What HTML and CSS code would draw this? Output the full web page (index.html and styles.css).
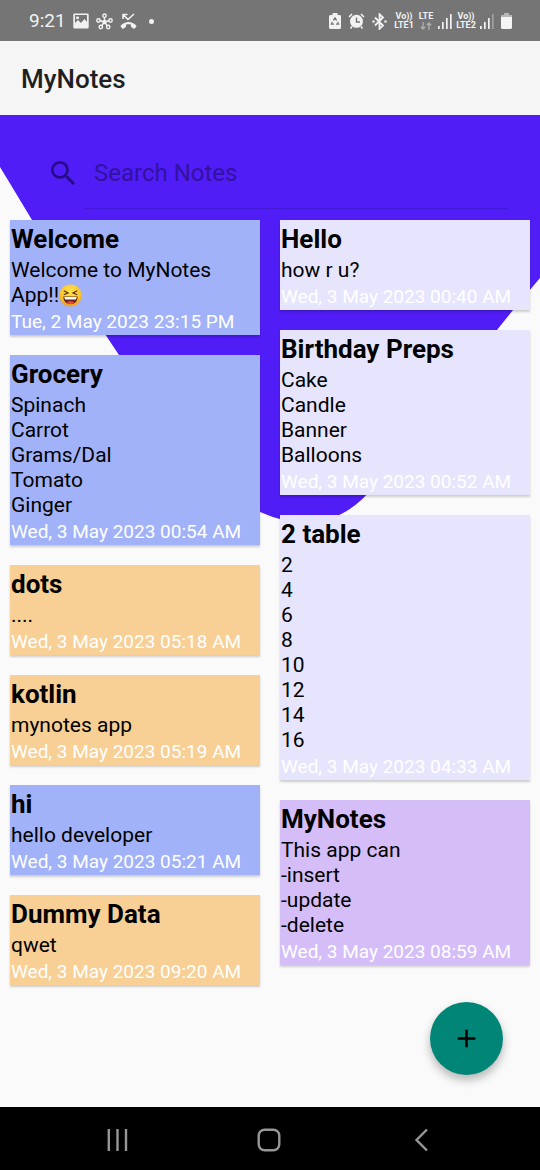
FILE: index.html
```html
<!DOCTYPE html>
<html lang="en">
<head>
<meta charset="utf-8">
<meta name="viewport" content="width=device-width, initial-scale=1">
<title>MyNotes</title>
<link rel="stylesheet" href="styles.css">
</head>
<body>
<div class="status">
  <div class="status-left">
    <span class="clock">9:21</span>
    <svg width="16" height="16" viewBox="0 0 16 16" aria-hidden="true"><path fill="#f2f2f2" fill-rule="evenodd" d="M1.500 0.500h13a1.200 1.200 0 0 1 1.200 1.200v12.600a1.200 1.200 0 0 1-1.200 1.200h-13a1.200 1.200 0 0 1-1.200-1.200V1.700A1.200 1.200 0 0 1 1.500 .5zM2 2v8l3-3 3 3 3.500-4L14 9V2zM4.500 3.200a1.500 1.500 0 1 1 0 3 1.500 1.500 0 0 1 0-3z"/></svg>
    <svg width="17" height="17" viewBox="0 0 17 17" fill="none" stroke="#f2f2f2" stroke-width="1.400" aria-hidden="true"><path d="M8.500 9V4M8.500 9L3.500 7.500M8.500 9l5-1.500M8.500 9l-3 4M8.500 9l3 4"/><circle cx="8.500" cy="2.700" r="1.700"/><circle cx="2.500" cy="7.500" r="1.700"/><circle cx="14.500" cy="7.500" r="1.700"/><circle cx="4.800" cy="14" r="1.700"/><circle cx="12.200" cy="14" r="1.700"/><circle cx="8.500" cy="9" r="1.500" fill="#f2f2f2"/></svg>
    <svg width="17" height="17" viewBox="0 0 17 17" aria-hidden="true"><path fill="none" stroke="#f2f2f2" stroke-width="1.600" d="M3 6V1.500H7.500M3 1.500l5 5L14 1"/><path fill="#f2f2f2" d="M.8 12.500C5 7.800 12 7.800 16.200 12.500c.4.500.3.900 0 1.300l-1.500 1.600c-.5.400-.9.400-1.400.1l-2-1.500c-.4-.3-.4-.7-.4-1.100v-1.300c-1.600-.5-3.200-.5-4.800 0v1.300c0 .4 0 .8-.4 1.100l-2 1.500c-.5.300-.9.300-1.400-.1L.8 13.800c-.3-.4-.4-.8 0-1.300z"/></svg>
    <span class="dot"></span>
  </div>
  <div class="status-right">
    <svg width="12" height="16" viewBox="0 0 12 16" aria-hidden="true"><path fill="#f2f2f2" d="M3.500 0h5v2H11l1 1v12l-1 1H1l-1-1V3l1-1h2.500z"/><path fill="none" stroke="#757575" stroke-width="1.300" d="M4.300 7.500L6 5l1.700 2.500M8.600 9l1 2.200H7M5 11.200H2.400l1-2.200"/></svg>
    <svg width="17" height="16" viewBox="0 0 17 16" aria-hidden="true"><path d="M1 4l3-3M16 4l-3-3M4 13.500L2.500 15.500M13 13.500l1.500 2" stroke="#f2f2f2" stroke-width="1.600"/><circle cx="8.500" cy="8.300" r="6.500" fill="#f2f2f2"/><path d="M8.500 4.500v4.500h3.500" fill="none" stroke="#757575" stroke-width="1.400"/></svg>
    <svg width="15" height="17" viewBox="0 0 15 17" fill="none" stroke="#f2f2f2" stroke-width="1.800" aria-hidden="true"><path d="M3 4.500l8 8-3.500 3.300V1.200L11 4.500l-8 8"/><path d="M.3 8.500h2.400M12.300 8.500h2.400" stroke-width="2.200"/></svg>
    <span class="net net-wide"><span>Vo))</span><span>LTE1</span></span>
    <span class="net"><span>LTE</span><svg width="12" height="9" viewBox="0 0 12 9" fill="none" stroke="#b0b0b0" stroke-width="1.300" aria-hidden="true"><path d="M3 1v7M.8 5.700L3 8l2.200-2.300M9 9V2M6.800 4.300L9 2l2.200 2.300"/></svg></span>
    <svg class="signal" width="14" height="16" viewBox="0 0 14 16" fill="#f2f2f2" aria-hidden="true"><path d="M0 13h1.700v3H0zM4 9h1.700v7H4zM8 5h1.700v11H8zM12 1h1.700v15H12z"/></svg>
    <span class="net net-wide"><span>Vo))</span><span>LTE2</span></span>
    <svg width="14" height="16" viewBox="0 0 14 16" fill="#f2f2f2" aria-hidden="true"><path d="M0 13h1.700v3H0zM4 9h1.700v7H4zM8 5h1.700v11H8z"/><path fill="#a0a0a0" d="M12 1h1.700v15H12z"/></svg>
    <svg width="11" height="16" viewBox="0 0 11 16" aria-hidden="true"><path fill="#b8b8b8" d="M3 0h5v2h3v3H0V2h3z"/><path fill="#f5f5f5" d="M0 4h11v11l-1 1H1l-1-1z"/></svg>
  </div>
</div>
<header class="appbar"><h1>MyNotes</h1></header>
<main class="content">
  <svg class="backdrop" viewBox="0 115 540 410" aria-hidden="true"><path fill="#501df6" d="M0 115H540V278L513 310 497 330 376 484Q330 543 260 512Q221 495 188 456Q180 447 119 355L105 334 32 220 0 167z"/></svg>
  <form class="search" role="search">
    <label for="q" aria-label="Search Notes"><svg width="24" height="24" viewBox="3 3 17.490 17.490" fill="#260c86" aria-hidden="true"><path d="M15.500 14h-.79l-.28-.27A6.471 6.471 0 0 0 16 9.500 6.500 6.500 0 1 0 9.500 16c1.610 0 3.090-.59 4.230-1.570l.27.28v.79l5 4.990L20.490 19l-4.990-5zm-6 0C7.010 14 5 11.990 5 9.500S7.010 5 9.500 5 14 7.010 14 9.500 11.990 14 9.500 14z"/></svg></label>
    <input id="q" type="text" placeholder="Search Notes">
  </form>
  <div class="notes">
    <div class="column">
      <article class="note blue"><h2>Welcome</h2><p class="text">Welcome to MyNotes App!!<svg class="emoji" width="23" height="23" viewBox="0 0 24 24" role="img" aria-label="😆"><defs><radialGradient id="face" cx=".5" cy=".35" r=".65"><stop offset="0" stop-color="#ffe64d"/><stop offset=".7" stop-color="#fcc52d"/><stop offset="1" stop-color="#ee9a22"/></radialGradient></defs><circle cx="12" cy="12" r="11.500" fill="url(#face)"/><path d="M5 7l4.500 2.300L5 11.200M19 7l-4.500 2.300L19 11.200" fill="none" stroke="#59351f" stroke-width="1.300"/><path d="M4.500 13h15c0 5-3 8-7.500 8s-7.500-3-7.500-8z" fill="#6b2418"/><path d="M5.500 13.500h13l-.8 2.800H6.300z" fill="#fff"/><path d="M8 19.500c2-2 6-2 8 0-2 1.800-6 1.800-8 0z" fill="#e9483f"/></svg></p><time>Tue, 2 May 2023 23:15 PM</time></article>
      <article class="note blue"><h2>Grocery</h2><p class="text">Spinach<br>Carrot<br>Grams/Dal<br>Tomato<br>Ginger</p><time>Wed, 3 May 2023 00:54 AM</time></article>
      <article class="note orange"><h2>dots</h2><p class="text">....</p><time>Wed, 3 May 2023 05:18 AM</time></article>
      <article class="note orange"><h2>kotlin</h2><p class="text">mynotes app</p><time>Wed, 3 May 2023 05:19 AM</time></article>
      <article class="note blue"><h2>hi</h2><p class="text">hello developer</p><time>Wed, 3 May 2023 05:21 AM</time></article>
      <article class="note orange"><h2>Dummy Data</h2><p class="text">qwet</p><time>Wed, 3 May 2023 09:20 AM</time></article>
    </div>
    <div class="column">
      <article class="note lavender"><h2>Hello</h2><p class="text">how r u?</p><time>Wed, 3 May 2023 00:40 AM</time></article>
      <article class="note lavender"><h2>Birthday Preps</h2><p class="text">Cake<br>Candle<br>Banner<br>Balloons</p><time>Wed, 3 May 2023 00:52 AM</time></article>
      <article class="note lavender"><h2>2 table</h2><p class="text">2<br>4<br>6<br>8<br>10<br>12<br>14<br>16</p><time>Wed, 3 May 2023 04:33 AM</time></article>
      <article class="note purple"><h2>MyNotes</h2><p class="text">This app can<br>-insert<br>-update<br>-delete</p><time>Wed, 3 May 2023 08:59 AM</time></article>
    </div>
  </div>
  <button class="fab" type="button" aria-label="Add note"><svg width="19" height="19" viewBox="0 0 20 20" stroke="#000" stroke-width="2.600" aria-hidden="true"><path d="M10 .7v18.600M.7 10h18.600"/></svg></button>
</main>
<nav class="navbar" aria-label="System">
  <button type="button" aria-label="Recent apps"><svg width="24" height="24" viewBox="0 0 24 24" stroke="#969696" stroke-width="2.400" aria-hidden="true"><path d="M3.800 1v22M12.500 1v22M21 1v22"/></svg></button>
  <button type="button" aria-label="Home"><svg width="24" height="24" viewBox="0 0 24 24" fill="none" stroke="#969696" stroke-width="2.400" aria-hidden="true"><rect x="1.700" y="1.700" width="20.600" height="20.600" rx="6"/></svg></button>
  <button type="button" aria-label="Back"><svg width="24" height="24" viewBox="0 0 24 24" fill="none" stroke="#969696" stroke-width="2.400" aria-hidden="true"><path d="M18 1.500L7.500 12 18 22.500"/></svg></button>
</nav>
</body>
</html>
```

FILE: styles.css
```css
* {
  box-sizing: border-box;
}

body {
  margin: 0;
  min-height: 100vh;
  display: flex;
  flex-direction: column;
  background: #fafafa;
  color: #000;
  font-family: Roboto, sans-serif;
}

h1,
h2,
p {
  margin: 0;
}

svg {
  display: block;
  flex: none;
}

button {
  border: 0;
  padding: 0;
  background: none;
}

.status {
  display: flex;
  align-items: center;
  justify-content: space-between;
  height: 41px;
  padding: 1px 28px 0 29px;
  background: #757575;
  color: #f2f2f2;
}

.status-left {
  display: flex;
  align-items: center;
  gap: 7px;
}

.clock {
  font-size: 19px;
  line-height: 24px;
}

.dot {
  width: 5px;
  height: 5px;
  margin-left: 5px;
  border-radius: 50%;
  background: #f2f2f2;
}

.status-right {
  display: flex;
  align-items: center;
  gap: 7px;
}

.net {
  display: flex;
  flex-direction: column;
  align-items: center;
  width: 16px;
  margin-right: -3px;
  font-size: 9px;
  line-height: 9px;
  font-weight: 700;
}

.net-wide {
  width: 20px;
}

.signal {
  margin-right: -3px;
}

.appbar {
  display: flex;
  align-items: center;
  height: 74px;
  padding: 2px 21px 0;
  background: #f5f5f5;
}

.appbar h1 {
  font-size: 26px;
  line-height: 32px;
  font-weight: 500;
  color: #1f1f1f;
}

.content {
  position: relative;
  flex: 1;
  padding: 0 10px 120px;
}

.backdrop {
  position: absolute;
  top: 0;
  left: 0;
  width: 100%;
  height: auto;
}

.search {
  position: relative;
  display: flex;
  align-items: center;
  margin: 0 22px 11px 41px;
  padding-top: 22px;
}

.search input {
  flex: 1;
  min-width: 0;
  height: 72px;
  margin-left: 9px;
  padding: 0 10px;
  border: 0;
  border-bottom: 1px solid #4519da;
  outline: 0;
  background: none;
  color: #000;
  font: 24px/30px Roboto, sans-serif;
}

.search input::placeholder {
  color: #3312a0;
  opacity: 1;
}

.notes {
  position: relative;
  display: grid;
  grid-template-columns: 1fr 1fr;
  gap: 20px;
}

.column {
  display: flex;
  flex-direction: column;
  gap: 20px;
}

.note {
  padding-left: 1px;
  box-shadow: 0 2px 2px rgba(0, 0, 0, 0.18);
}

.note h2 {
  font-size: 26px;
  line-height: 38px;
  font-weight: 700;
}

.text {
  font-size: 21px;
  line-height: 25px;
}

.note time {
  display: block;
  font-size: 19px;
  line-height: 27px;
  color: #fff;
}

.emoji {
  display: inline-block;
  vertical-align: -5px;
}

.blue {
  background: #a2b2f9;
}

.orange {
  background: #f8cf95;
}

.lavender {
  background: #e6e5fd;
}

.purple {
  background: #d5bdf8;
}

.fab {
  position: absolute;
  right: 37px;
  bottom: 32px;
  display: grid;
  place-items: center;
  width: 73px;
  height: 73px;
  border-radius: 50%;
  background: #018577;
  box-shadow: 0 5px 10px rgba(0, 0, 0, 0.28);
}

.navbar {
  display: flex;
  align-items: center;
  justify-content: space-around;
  height: 63px;
  padding: 2px 43px 0 41px;
  background: #000;
}
```
